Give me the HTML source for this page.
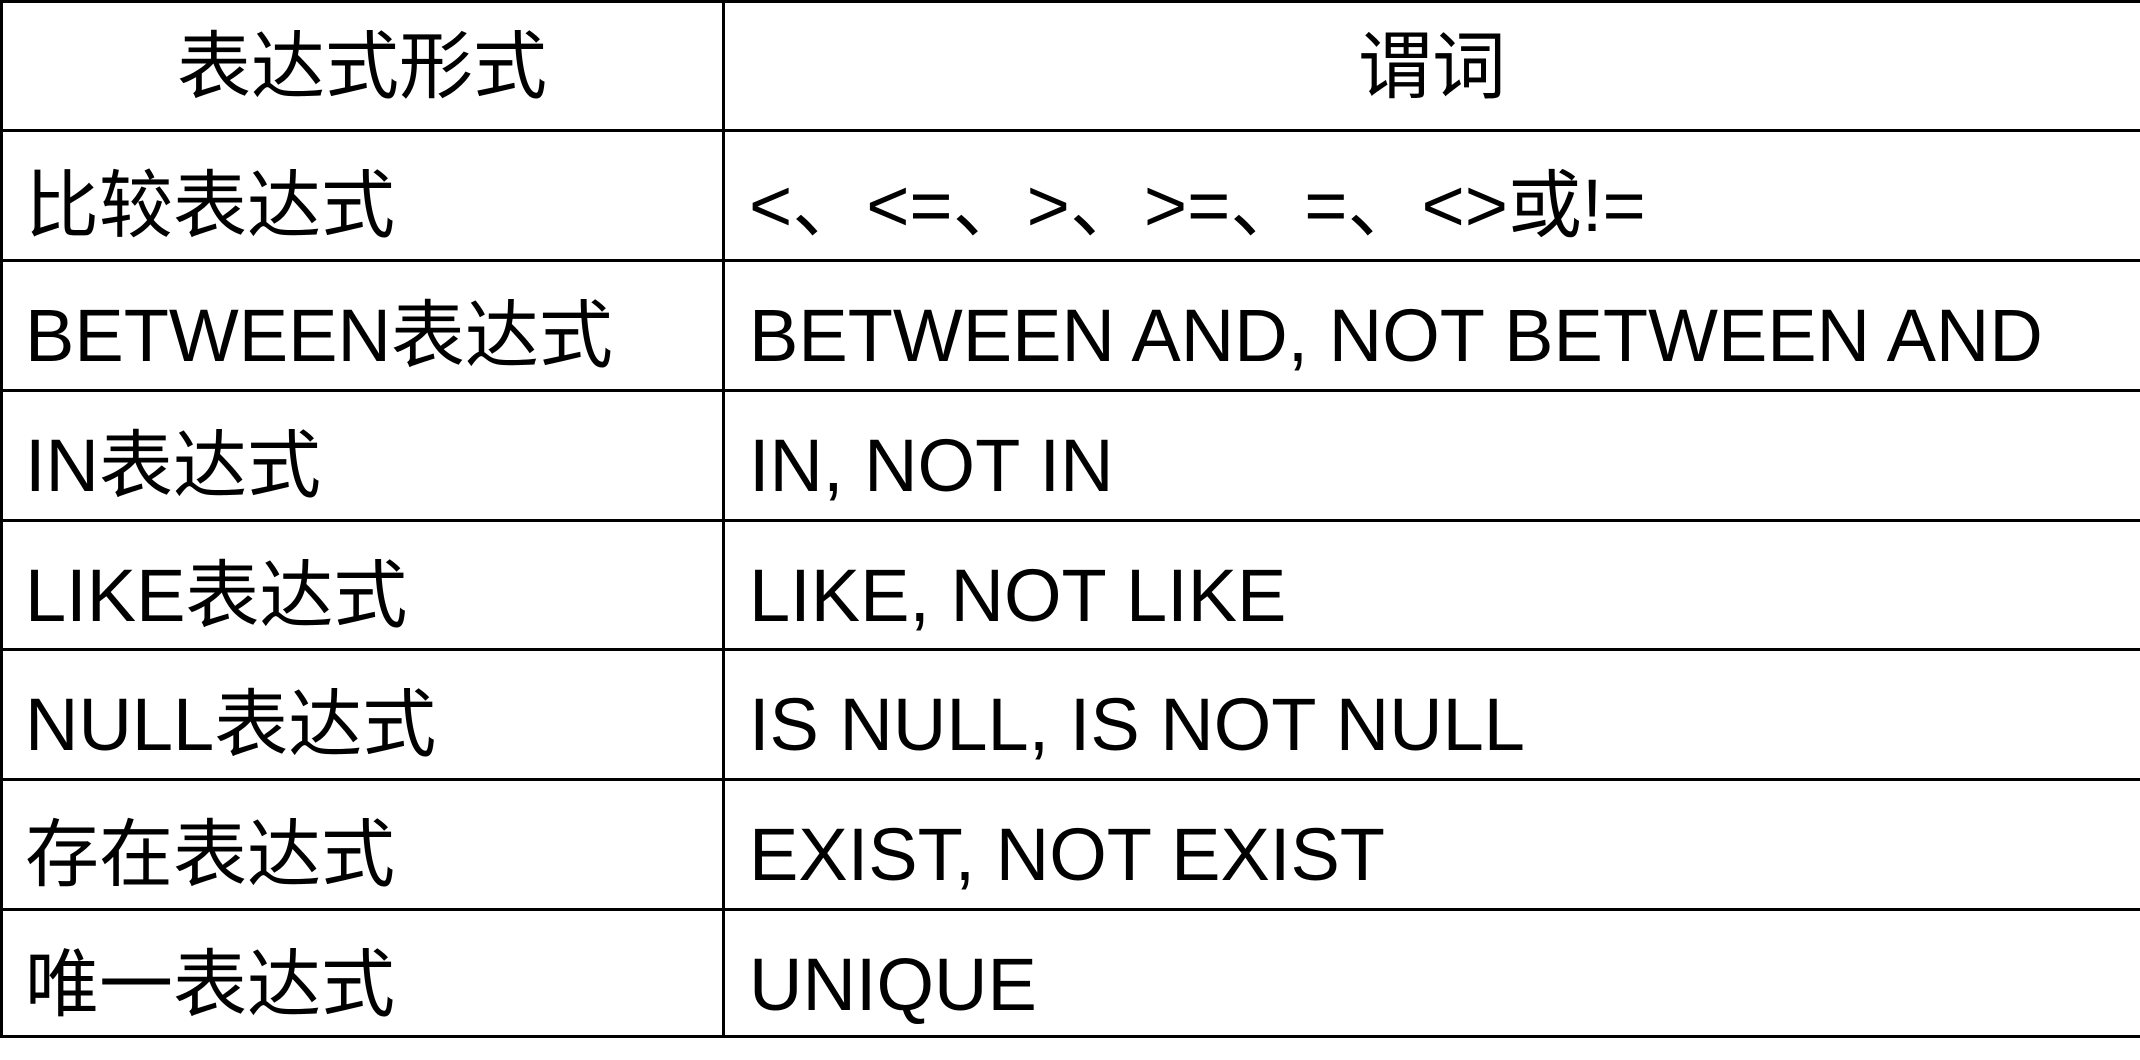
<!DOCTYPE html>
<html><head><meta charset="utf-8"><style>
html,body{margin:0;padding:0;background:#fff;}
body{width:2140px;height:1038px;position:relative;overflow:hidden;font-family:"Liberation Sans","Noto Sans CJK SC",sans-serif;font-size:74px;color:#000;}
.h{position:absolute;left:0;width:2140px;height:3px;background:#000;}
.v{position:absolute;top:0;height:1038px;width:3px;background:#000;}
.c{position:absolute;height:130px;line-height:150px;white-space:nowrap;}
.l{left:25px}.r{left:749px}
</style></head><body>
<div class="h" style="top:0"></div>
<div class="h" style="top:129px"></div>
<div class="h" style="top:259px"></div>
<div class="h" style="top:389px"></div>
<div class="h" style="top:519px"></div>
<div class="h" style="top:648px"></div>
<div class="h" style="top:778px"></div>
<div class="h" style="top:908px"></div>
<div class="h" style="top:1035px"></div>
<div class="v" style="left:0"></div>
<div class="v" style="left:722px"></div>

<div class="c" style="top:-8px;left:0;width:724px;text-align:center">表达式形式</div>
<div class="c" style="top:-8px;left:724px;width:1416px;text-align:center">谓词</div>

<div class="c l" style="top:131px">比较表达式</div>
<div class="c r" style="top:131px">&lt;、&lt;=、&gt;、&gt;=、=、&lt;&gt;或!=</div>
<div class="c l" style="top:261px">BETWEEN表达式</div>
<div class="c r" style="top:261px">BETWEEN AND, NOT BETWEEN AND</div>
<div class="c l" style="top:391px">IN表达式</div>
<div class="c r" style="top:391px">IN, NOT IN</div>
<div class="c l" style="top:521px">LIKE表达式</div>
<div class="c r" style="top:521px">LIKE, NOT LIKE</div>
<div class="c l" style="top:650px">NULL表达式</div>
<div class="c r" style="top:650px">IS NULL, IS NOT NULL</div>
<div class="c l" style="top:780px">存在表达式</div>
<div class="c r" style="top:780px">EXIST, NOT EXIST</div>
<div class="c l" style="top:910px">唯一表达式</div>
<div class="c r" style="top:910px">UNIQUE</div>
</body></html>
